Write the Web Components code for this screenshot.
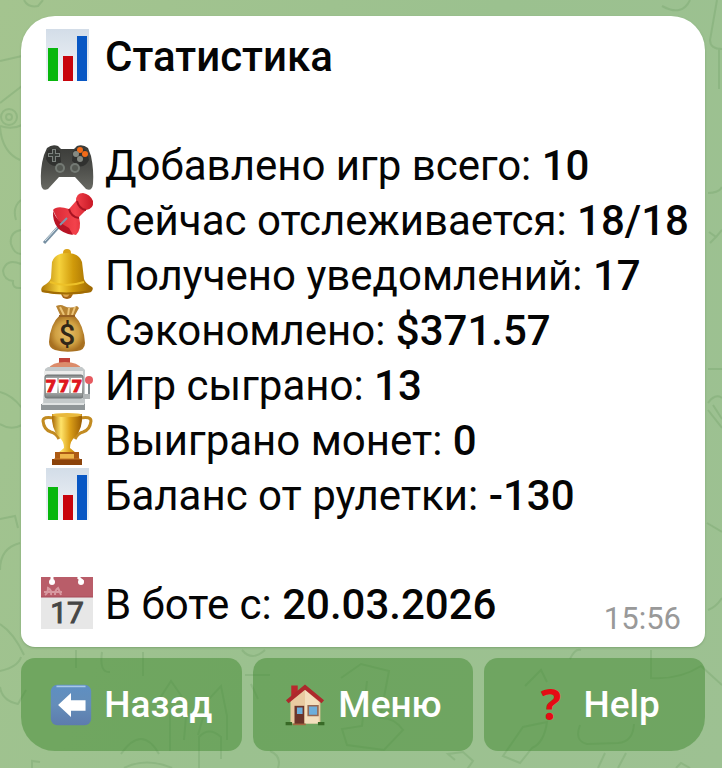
<!DOCTYPE html>
<html lang="ru">
<head>
<meta charset="utf-8">
<meta name="viewport" content="width=device-width, initial-scale=1">
<title>Статистика</title>
<style>
html{min-height:100%;background:#9dc28f}
body{margin:0;min-height:100vh;font-family:Roboto,"Noto Sans",sans-serif;color:#050505;overflow-x:hidden}
</style>
</head>
<body>
<chat-screen>
  <message-card>
    <stat-line slot="title" icon="chart"><b>Статистика</b></stat-line>
    <stat-line icon="gamepad">Добавлено игр всего: <b>10</b></stat-line>
    <stat-line icon="pin">Сейчас отслеживается: <b>18/18</b></stat-line>
    <stat-line icon="bell">Получено уведомлений: <b>17</b></stat-line>
    <stat-line icon="bag">Сэкономлено: <b>$371.57</b></stat-line>
    <stat-line icon="slots">Игр сыграно: <b>13</b></stat-line>
    <stat-line icon="trophy">Выиграно монет: <b>0</b></stat-line>
    <stat-line icon="chart">Баланс от рулетки: <b>-130</b></stat-line>
    <stat-line slot="footer" icon="calendar">В боте с: <b>20.03.2026</b></stat-line>
    <time slot="time">15:56</time>
  </message-card>
  <inline-keyboard>
    <key-button icon="back" corner="left">Назад</key-button>
    <key-button icon="house">Меню</key-button>
    <key-button icon="question" corner="right">Help</key-button>
  </inline-keyboard>
</chat-screen>

<script>
const ICONS = {
  chart: `<defs><linearGradient id="a" x2="0" y2="1"><stop stop-color="#d3dde8"/><stop offset="1" stop-color="#f2f5f8"/></linearGradient></defs>
    <path fill="url(#a)" d="M5 0h43v52H5z"/><path fill="#08b70d" d="M7 19h10v33H7z"/><path fill="#c8040c" d="M22 27h10v25H22z"/><path fill="#0857c4" d="M36 7h10v45H36z"/>`,
  gamepad: `<defs><linearGradient id="a" x2="0" y2="1"><stop stop-color="#3a3b38"/><stop offset=".5" stop-color="#4c4d49"/><stop offset="1" stop-color="#686963"/></linearGradient></defs>
    <g transform="translate(0 2)"><path fill="url(#a)" d="M6 8Q11 4 17 6l3 3h13l3-3q6-2 11 2l3 8q3 14 2 28-1 8-7 5L34 37H18L7 49q-6 3-7-5Q-1 28 3 15z"/>
    <path fill="#30312f" d="M6 11q6-5 13 0l1 11-5 4q-7 0-10-7zm26 0q7-5 14 0l2 9q-4 8-11 6l-6-5z"/>
    <path stroke="#7b817d" stroke-width="4" d="M13 9v13M7 15h12"/><path stroke="#393e3a" stroke-width="2" d="M13 10v11M8 15h10"/>
    <g fill="#747a74"><circle cx="19" cy="28" r="5"/><circle cx="34" cy="28" r="5"/></g><g fill="#555953"><circle cx="19" cy="28" r="3"/><circle cx="34" cy="28" r="3"/></g>
    <g fill="#f26b19"><circle cx="39" cy="10" r="3"/><circle cx="44" cy="14" r="3"/></g><g fill="#858a83"><circle cx="35" cy="14" r="3"/><circle cx="39" cy="19" r="3"/></g></g>`,
  pin: `<defs><linearGradient id="a"><stop stop-color="#d92835"/><stop offset=".55" stop-color="#f3424b"/><stop offset="1" stop-color="#c81825"/></linearGradient></defs>
    <path stroke="#7790a3" stroke-width="3" d="M3 50 22 29"/><path stroke="#d9e4e9" d="M4 48 22 28"/>
    <path fill="url(#a)" d="M12 17q4-5 16-1l7-8q0-8 7-8 7 1 10 8 1 8-7 9l-7 7q3 12-3 18Q22 40 12 17"/>
    <path fill="#b81425" d="M12 18q4 11 16 17l4 7Q11 39 12 18"/><path fill="none" stroke="#a91322" stroke-width="2" d="M28 16q2 8 10 9M36 8q2 8 9 9"/><path stroke="#8496ab" stroke-width="2" d="m19 32 7-7"/>`,
  bell: `<defs><linearGradient id="a"><stop stop-color="#ad7705"/><stop offset=".35" stop-color="#f6d23c"/><stop offset=".62" stop-color="#d09a0a"/><stop offset="1" stop-color="#9a6502"/></linearGradient></defs>
    <circle cx="26" cy="5" r="4" fill="#d9a116"/><circle cx="26" cy="45" r="6" fill="#a56414"/><circle cx="25" cy="46" r="3" fill="#dca451"/>
    <path fill="url(#a)" d="M11 14Q14 5 26 5t15 9l2 17q1 4 8 8 2 2-1 5-24 5-49 0-2-3 1-6 7-4 8-8z"/>
    <path fill="none" stroke="#edc128" stroke-width="2" d="M9 34q16 6 34 0"/><path fill="none" stroke="#a16b04" stroke-width="2" d="M1 43q24 5 49 0"/>`,
  bag: `<defs><radialGradient id="a"><stop stop-color="#e8be67"/><stop offset=".65" stop-color="#d0a042"/><stop offset="1" stop-color="#a87121"/></radialGradient></defs>
    <path fill="#b78332" d="M15 3q5-2 8 0 6 3 13 0l2 2-5 9H20z"/><path stroke="#ecc477" stroke-width="2" d="m19 4 4 8m5-7-1 8m7-9-3 8"/>
    <path fill="url(#a)" d="M19 12h14q10 10 11 28 0 7-8 8-12 2-22-1-6-2-6-8 1-18 11-27"/><path stroke="#976022" stroke-width="2" d="M18 13h16"/>
    <text x="26" y="42" text-anchor="middle" font-size="29" font-weight="500" fill="#302719">$</text>`,
  slots: `<defs><linearGradient id="a" x2="0" y2="1"><stop stop-color="#777c7d"/><stop offset=".35" stop-color="#f7f7f3"/><stop offset="1" stop-color="#777c7d"/></linearGradient></defs>
    <path fill="#c14238" d="M18 0h11v6H18z"/><path fill="#dc8c6b" d="M7 11q4-7 17-7t17 7z"/><path fill="#c4c9ca" d="m4 11 3-2h34l3 3v35H2z"/><path fill="#ececeb" d="M3 13h39v5H3z"/>
    <rect x="4" y="17" width="38" height="23" rx="2" fill="url(#a)" stroke="#747879"/><g fill="#fff"><path d="M5 20h11v15H5zm13 0h10v15H18zm12 0h11v15H30z"/></g>
    <g font-size="17" font-weight="900" fill="#df1720" stroke="#df1720" text-anchor="middle"><text x="10" y="34">7</text><text x="23" y="34">7</text><text x="36" y="34">7</text></g>
    <path stroke="#80888c" stroke-width="2" d="M48 25v15h-4"/><circle cx="48" cy="22" r="4" fill="#e65b60"/><path fill="#b1b5b6" d="M42 36h7v5h-7z"/><path fill="#909698" d="M0 46h44v6H0z"/><path stroke="#e0e3e3" stroke-width="2" d="M1 46h42"/>`,
  trophy: `<defs><linearGradient id="a"><stop stop-color="#a86804"/><stop offset=".3" stop-color="#ffe46a"/><stop offset=".6" stop-color="#dca018"/><stop offset="1" stop-color="#995b02"/></linearGradient></defs>
    <path fill="none" stroke="#c28b21" stroke-width="3" d="M13 5q-11-2-11 3 1 9 8 11 5 1 8 7M39 5q11-2 11 3-1 9-8 11-5 1-8 7"/>
    <path fill="url(#a)" d="M11 1h30q1 15-7 23-5 4-5 11l6 5H17l6-5q0-7-5-11Q10 16 11 1"/><ellipse cx="26" cy="2" rx="15" ry="2" fill="#e9b93d"/>
    <path fill="#ad5b14" d="M14 39h24v8H14z"/><path fill="#8b430b" d="M11 46h30v6H11z"/><path fill="#eeb64a" d="M19 41h14v5H19z"/><path stroke="#c47424" d="M13 46h26"/>`,
  calendar: `<path fill="#e7e7e7" d="M0 0h52v52H0z"/><path fill="#b95d69" d="M0 0h52v20H0z"/><path stroke="#a64c5b" d="M0 20h52"/>
    <path stroke="#fff" stroke-width="3" d="M11 0v7m26-7 5 5"/><g fill="#fff"><circle cx="11" cy="5" r="3"/><circle cx="40" cy="5" r="3"/></g>
    <path fill="none" stroke="#d899a0" stroke-width="2" d="M4 18q3-2 3-7 4 2 3 7m4 0q0-5 3-7 2 4 3 7M3 15h18"/>
    <text x="26" y="46" text-anchor="middle" font-size="30" fill="#464646" stroke="#464646">17</text>`,
  back: `<defs><linearGradient id="a" x2="0" y2="1"><stop stop-color="#5e8fc2"/><stop offset=".5" stop-color="#648db9"/><stop offset="1" stop-color="#5d7cad"/></linearGradient></defs>
    <rect x="1" y="1" width="50" height="50" rx="8" fill="url(#a)"/><path stroke="#a8c8e8" stroke-width="2" d="M8 3h36"/><path fill="#fff" d="m10 26 16-15v9h18v13H26v8z"/>`,
  house: `<path fill="#e9cba1" d="M8 19 26 3l19 17v29H8z"/><path fill="#f4dfbd" d="m26 7 17 15v27H26z"/><path fill="#b9282d" d="M9 2h8v10L9 19z"/><path fill="none" stroke="#ad292c" stroke-width="5" d="M4 22 26 4l22 18"/>
    <path fill="#6c342a" d="M13 27h12v23H13z"/><path fill="#6eaedb" d="M16 29h7v8h-7zm14-2h12v12H30z"/><path fill="none" stroke="#956853" stroke-width="2" d="M30 27h12v12H30z"/><path fill="#386a26" d="M2 47h8v4H2zm40 0h8v4h-8z"/><path fill="#a5643f" d="M11 49h16v2H11z"/>`,
  question: `<text x="26" y="45" text-anchor="middle" font-size="53" font-weight="700" font-family="Open Sans, sans-serif" fill="#e50b14">?</text>`
};

class EmojiIcon extends HTMLElement {
  connectedCallback() {
    if (this.shadowRoot) return;
    this.attachShadow({mode: 'open'}).innerHTML = `<style>
      :host{display:block;flex:none;width:52px;height:52px}svg{display:block;width:100%;height:100%;overflow:visible}
      </style><svg viewBox="0 0 52 52" fill="none" aria-hidden="true">${ICONS[this.getAttribute('name')]}</svg>`;
  }
}

class StatLine extends HTMLElement {
  connectedCallback() {
    if (this.shadowRoot) return;
    this.attachShadow({mode: 'open'}).innerHTML = `<style>
      :host{display:flex;gap:12px;align-items:flex-start;font-size:42px;line-height:55px}
      ::slotted(b){font-weight:500}
      </style><emoji-icon name="${this.getAttribute('icon')}"></emoji-icon><span><slot></slot></span>`;
  }
}

class MessageCard extends HTMLElement {
  connectedCallback() {
    if (this.shadowRoot) return;
    this.attachShadow({mode: 'open'}).innerHTML = `<style>
      :host{display:flex;flex-direction:column;gap:54px;padding:13px 8px 10px 20px;background:#fff;border-radius:34px 34px 14px 14px;box-shadow:0 1px 2px #5f8b5580}
      footer{display:flex;justify-content:space-between;align-items:flex-start;min-height:60px}
      ::slotted(time){align-self:flex-end;padding-right:16px;font-size:31px;line-height:36px;color:#999}
      </style><header><slot name="title"></slot></header><section><slot></slot></section>
      <footer><slot name="footer"></slot><slot name="time"></slot></footer>`;
  }
}

class KeyButton extends HTMLElement {
  connectedCallback() {
    if (this.shadowRoot) return;
    this.attachShadow({mode: 'open'}).innerHTML = `<style>
      :host{display:block}
      button{display:flex;align-items:center;justify-content:center;gap:12px;width:100%;min-height:93px;padding:0 8px;border:0;border-radius:14px;background:rgb(66 138 50 / .5);color:#fff;font:500 37px/44px Roboto,"Noto Sans",sans-serif;cursor:pointer}
      :host([corner=left]) button{border-bottom-left-radius:34px}
      :host([corner=right]) button{border-bottom-right-radius:34px}
      emoji-icon{width:42px;height:42px}
      </style><button type="button"><emoji-icon name="${this.getAttribute('icon')}"></emoji-icon><span><slot></slot></span></button>`;
  }
}

class InlineKeyboard extends HTMLElement {
  connectedCallback() {
    if (this.shadowRoot) return;
    this.attachShadow({mode: 'open'}).innerHTML = `<style>
      :host{display:grid;grid-template-columns:repeat(3,1fr);gap:11px}
      </style><slot></slot>`;
  }
}

class ChatScreen extends HTMLElement {
  connectedCallback() {
    if (this.shadowRoot) return;
    this.attachShadow({mode: 'open'}).innerHTML = `<style>
      :host{display:block;position:relative;min-height:100vh;box-sizing:border-box;padding:16px 17px 17px 21px;background:linear-gradient(110deg,#a4c48f,#9bc18f 50%,#9dc192)}
      .wallpaper{position:absolute;inset:0;width:100%;height:100%}
      main{position:relative;display:flex;flex-direction:column;gap:11px}
      </style>
      <svg class="wallpaper" viewBox="0 0 722 768" preserveAspectRatio="xMidYMid slice" fill="none" stroke="#78a56d" stroke-opacity=".4" stroke-width="2" aria-hidden="true">
        <path d="M24 0q4 8 14 6l5-6M0 61l22-5M0 103l22-17M0 126q12 4 22-1M0 127q2 25 20 33"/><circle cx="9" cy="117" r="8"/><circle cx="9" cy="117" r="3"/>
        <path d="M21 200q-9 7-5 20M21 230q-12 2-10 14 3 10 10 10M21 264q-15-6-18 7 1 9 10 10-1 8 8 7M0 392q12 3 22 16M0 424q11 7 22 1M0 519l15-3 3 12M0 570q0-22 20-27M0 624q14 9 24 31M0 671q18-4 21-14"/>
        <path d="M662 6q20 11 28-6M717 0l-7 40q0 9 12 9M719 49v40M708 193q11 0 14-6M709 232l7 5-6 6M716 237l6-7M708 369h14M708 403q7-10 14-5M708 410l14 18M713 405l9 14M707 523l15 9M708 610q8-3 14-12"/>
        <path d="M0 687q2 14 18 17l8-14M76 650v18m26-16q-3 21 8 20m33-20v24M170 751v-40l-10-13 11-17 16 23-3 36M198 735l10-35 13-14 6 30v24M121 754q21-30 38 0M199 768v-31q10-11 22 0v22M124 768q22-11 48 0M32 768v-7l8 1"/>
        <path d="M242 650q10 12 23 0m-20 25h25m-19 9 7 15m83-21 20-14 28 7-9 47q14-1 23 12l-19 20-37-5-5-16 20-3 5-45M270 751q12 5 8 17m177-8-7-6 15-2 10 9-10 14"/>
        <path d="M525 686l16-16 6 12m23-23q5-11 11-9M503 756l20-29 24-5q-3 21-15 26l-12 15zm77-31q-6 16 7 19l31-1q15-1 16-19m-29 29-7 15m28-15-8 15M651 650v28q28 2 50-12l21 19M676 768l5-5 9 5"/>
      </svg>
      <main><slot></slot></main>`;
  }
}

customElements.define('emoji-icon', EmojiIcon);
customElements.define('stat-line', StatLine);
customElements.define('message-card', MessageCard);
customElements.define('key-button', KeyButton);
customElements.define('inline-keyboard', InlineKeyboard);
customElements.define('chat-screen', ChatScreen);
</script>
</body>
</html>
